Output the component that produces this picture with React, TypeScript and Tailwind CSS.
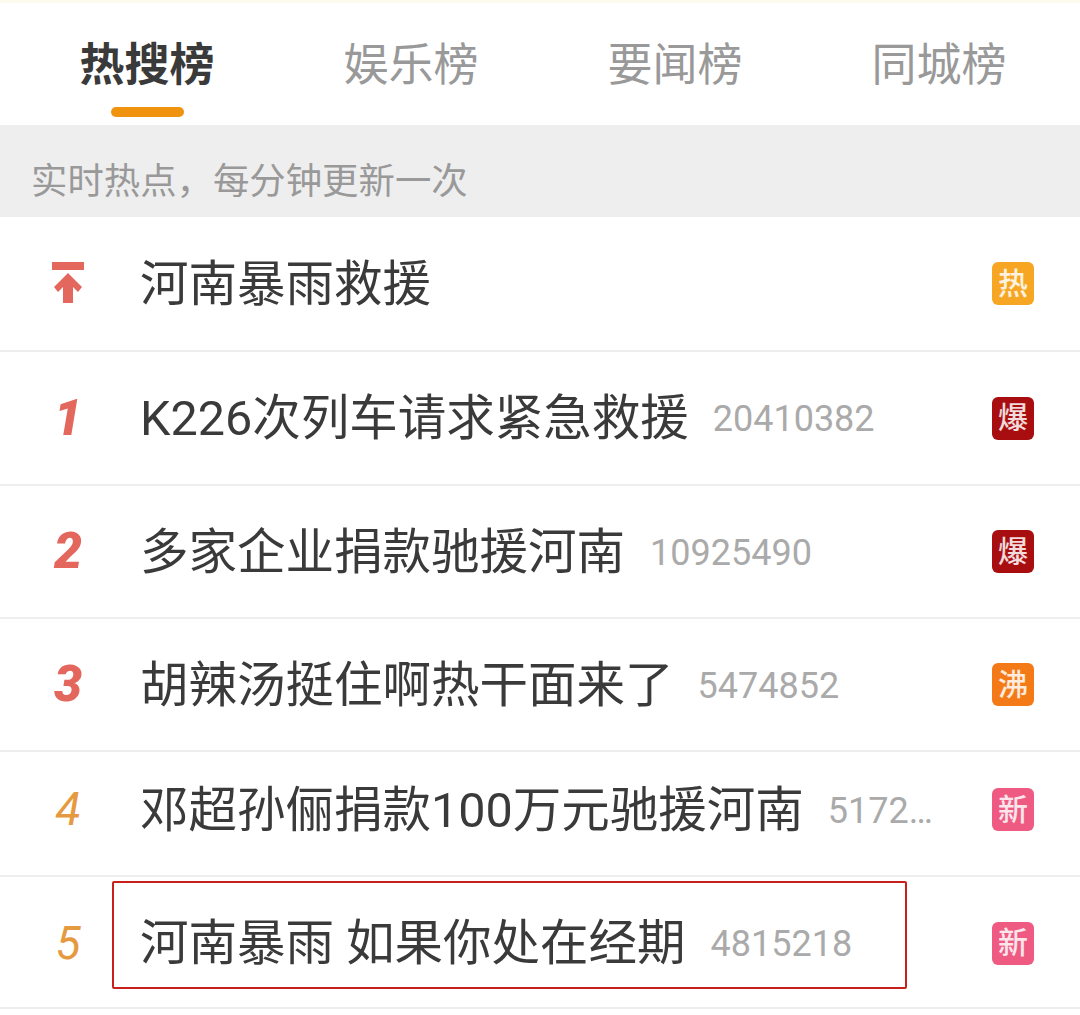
import React from 'react';

const FONT = "font-['Roboto','Noto_Sans_CJK_SC',sans-serif]";

const tabs = ['热搜榜', '娱乐榜', '要闻榜', '同城榜'];

type Badge = '热' | '爆' | '沸' | '新';

interface Row {
  rank: string;
  title: string;
  count?: string;
  badge: Badge;
  height: string;
  numberColor: string;
  gap: string;
}

const rows: Row[] = [
  { rank: 'top', title: '河南暴雨救援', badge: '热', height: 'h-[135px]', numberColor: '', gap: '' },
  { rank: '1', title: 'K226次列车请求紧急救援', count: '20410382', badge: '爆', height: 'h-[134px]', numberColor: 'text-[#e4675d] font-black text-[50px]', gap: 'ml-[24px]' },
  { rank: '2', title: '多家企业捐款驰援河南', count: '10925490', badge: '爆', height: 'h-[133px]', numberColor: 'text-[#e4675d] font-black text-[50px]', gap: 'ml-[25px]' },
  { rank: '3', title: '胡辣汤挺住啊热干面来了', count: '5474852', badge: '沸', height: 'h-[133px]', numberColor: 'text-[#e4675d] font-black text-[50px]', gap: 'ml-[24px]' },
  { rank: '4', title: '邓超孙俪捐款100万元驰援河南', count: '5172…', badge: '新', height: 'h-[125px] pb-[8px]', numberColor: 'text-[#e69a3f] text-[46px]', gap: 'ml-[24px]' },
  { rank: '5', title: '河南暴雨 如果你处在经期', count: '4815218', badge: '新', height: 'h-[132px] pt-[2px]', numberColor: 'text-[#e69a3f] text-[46px]', gap: 'ml-[25px]' },
];

function badgeStyle(badge: Badge) {
  switch (badge) {
    case '热':
      return 'bg-[#f6a623]';
    case '爆':
      return 'bg-[#a80d10]';
    case '沸':
      return 'bg-[#f47a18]';
    default:
      return 'bg-[#ee5a82]';
  }
}

function TopIcon() {
  return (
    <svg width="34" height="42" viewBox="0 0 34 42" className="block mt-[-1px]">
      <rect x="1" y="0" width="32" height="8" fill="#e4675d" />
      <path d="M17 11 L31 25 L27 30 L22 25 L22 41 L12 41 L12 25 L7 30 L3 25 Z" fill="#e4675d" />
    </svg>
  );
}

export default function App() {
  return (
    <div className={`relative w-[1080px] h-[1015px] overflow-hidden bg-white ${FONT}`}>
      <div className="h-[3px] bg-[#fdfbee]" />
      <div className="flex h-[122px]">
        {tabs.map((tab, i) => (
          <div key={tab} className="w-[264px] first:ml-[15px] flex flex-col items-center">
            <div className={`mt-[33px] text-[45px] leading-[60px] ${i === 0 ? 'font-bold text-[#3a3a3a]' : 'text-[#999999]'}`}>
              {tab}
            </div>
            {i === 0 && <div className="mt-[11px] w-[73px] h-[10px] rounded-full bg-[#f0940f]" />}
          </div>
        ))}
      </div>
      <div className="h-[92px] bg-[#eeeeee] pl-[31px] pt-[33px] text-[36.4px] leading-[48px] text-[#999999]">
        实时热点，每分钟更新一次
      </div>
      {rows.map((row) => (
        <div key={row.rank} className={`${row.height} flex items-center border-b-2 border-[#eeeeee]`}>
          <div className={`w-[140px] shrink-0 flex justify-center pr-[4px] italic ${row.numberColor}`}>
            {row.rank === 'top' ? <TopIcon /> : row.rank}
          </div>
          <div className="mt-[2px] text-[48.5px] leading-[60px] text-[#3a3a3a] whitespace-pre">{row.title}</div>
          {row.count && <div className={`${row.gap} mt-[2px] text-[36px] leading-[48px] text-[#aaaaaa]`}>{row.count}</div>}
          <div className={`ml-auto mr-[46px] w-[42px] h-[43px] rounded-[6px] flex items-center justify-center text-[30px] font-medium leading-none text-white/85 ${badgeStyle(row.badge)}`}>
            {row.badge}
          </div>
        </div>
      ))}
      <div className="absolute left-[112px] top-[881px] w-[795px] h-[108px] border-2 border-[#c8211c] rounded-[2px]" />
    </div>
  );
}
